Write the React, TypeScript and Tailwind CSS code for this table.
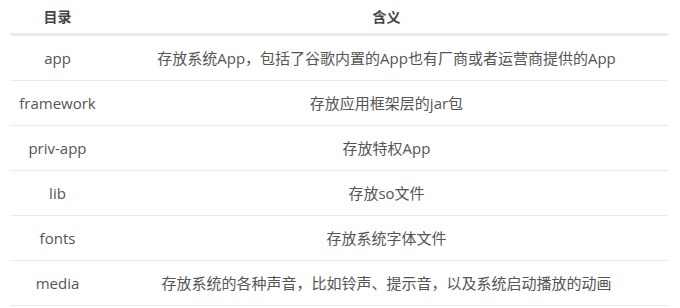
const rows = [
  { dir: 'app', desc: '存放系统App，包括了谷歌内置的App也有厂商或者运营商提供的App' },
  { dir: 'framework', desc: '存放应用框架层的jar包' },
  { dir: 'priv-app', desc: '存放特权App' },
  { dir: 'lib', desc: '存放so文件' },
  { dir: 'fonts', desc: '存放系统字体文件' },
  { dir: 'media', desc: '存放系统的各种声音，比如铃声、提示音，以及系统启动播放的动画' },
];

export default function App() {
  return (
    <div className="w-[680px] h-[308px] bg-white pl-[10px] pr-[12px] overflow-hidden font-['Open_Sans','Noto_Sans_CJK_SC',sans-serif] text-[15px] text-[#555]">
      <div className="flex h-[36px] border-b-[3px] border-[#e9ecef] text-[14px] font-bold text-[#444]">
        <div className="w-[95px] flex items-center justify-center">目录</div>
        <div className="flex-1 flex items-center justify-center">含义</div>
      </div>
      {rows.map((r) => (
        <div key={r.dir} className="flex h-[45px] border-b border-[#eaeaea]">
          <div className="w-[95px] flex items-center justify-center">{r.dir}</div>
          <div className="flex-1 flex items-center justify-center">{r.desc}</div>
        </div>
      ))}
    </div>
  );
}
